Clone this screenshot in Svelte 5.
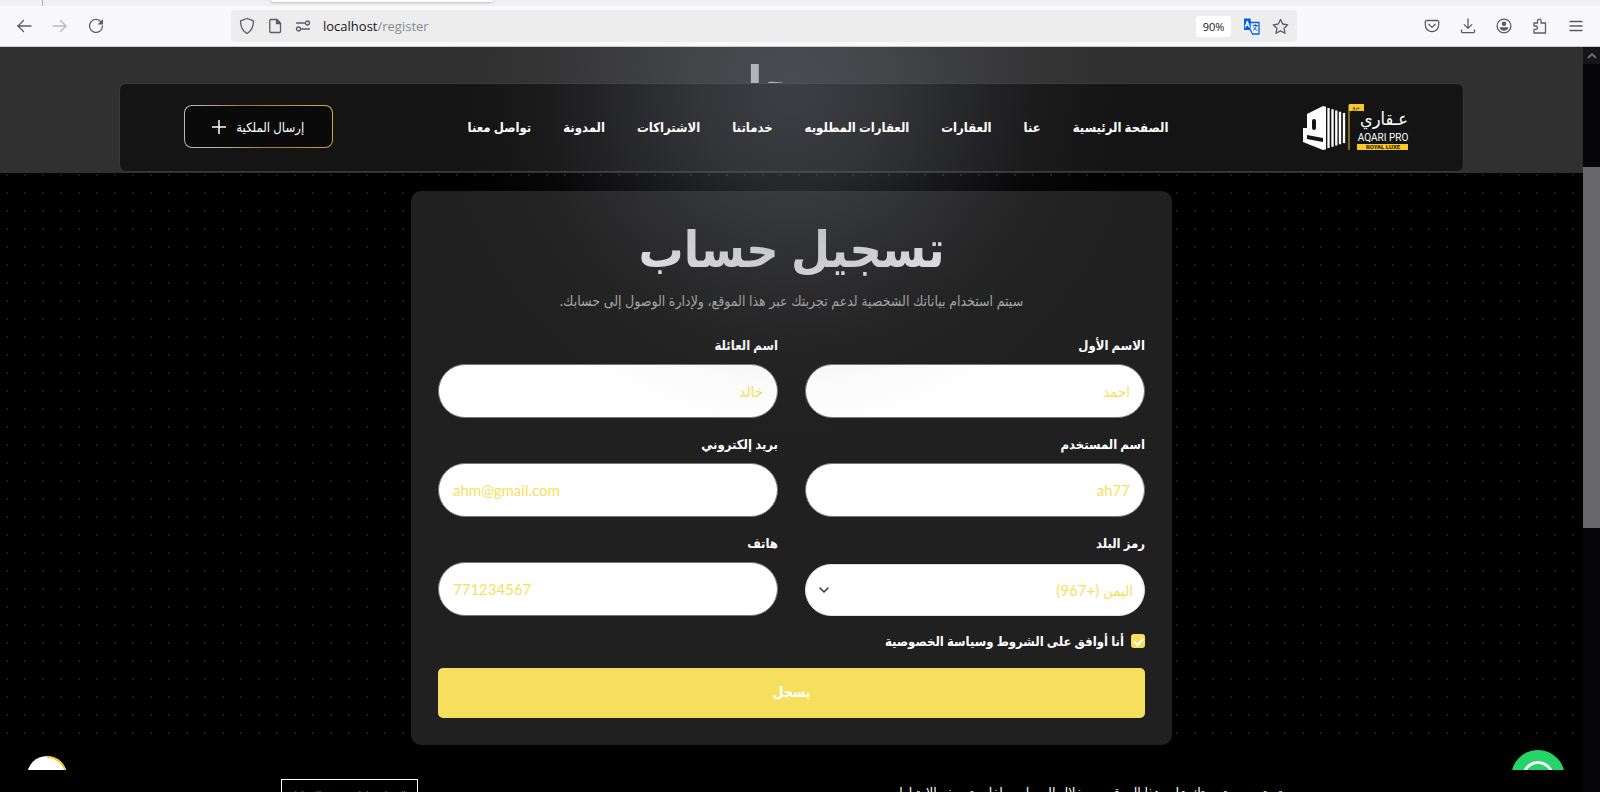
<script>
  const navItems = [
    'الصفحة الرئيسية',
    'عنا',
    'العقارات',
    'العقارات المطلوبه',
    'خدماتنا',
    'الاشتراكات',
    'المدونة',
    'تواصل معنا'
  ];

  const fields = [
    { id: 'first-name', label: 'الاسم الأول', placeholder: 'احمد', type: 'text', dir: 'rtl' },
    { id: 'last-name', label: 'اسم العائلة', placeholder: 'خالد', type: 'text', dir: 'rtl' },
    { id: 'username', label: 'اسم المستخدم', placeholder: 'ah77', type: 'text', dir: 'rtl' },
    { id: 'email', label: 'بريد إلكتروني', placeholder: 'ahm@gmail.com', type: 'email', dir: 'ltr' },
    { id: 'country', label: 'رمز البلد', options: ['اليمن (+967)'] },
    { id: 'phone', label: 'هاتف', placeholder: '771234567', type: 'tel', dir: 'ltr' }
  ];

  let agreed = $state(true);
</script>

<div class="browser">
  <div class="tabs"><span class="tab-line"></span><span class="tab"></span></div>
  <div class="toolbar">
    <div class="tools nav-tools">
      <button aria-label="Back"><svg width="16" height="16" viewBox="0 0 16 16"><path d="M15 8H1.600M7.500 2.500 2 8l5.500 5.500" /></svg></button>
      <button aria-label="Forward" class="off"><svg width="16" height="16" viewBox="0 0 16 16"><path d="M1 8h13.400M8.500 2.500 14 8l-5.500 5.500" /></svg></button>
      <button aria-label="Reload"><svg width="16" height="16" viewBox="0 0 16 16"><path d="M13.200 4A6.500 6.500 0 1 0 14.500 8" /><path d="M15 1v5.500H9.500z" fill="currentColor" stroke="none" /></svg></button>
    </div>
    <div class="address">
      <svg width="16" height="18" viewBox="0 0 16 18"><path d="M8 1.500 1.500 3.800C1.500 9.500 3.500 14 8 16.500c4.500-2.500 6.500-7 6.500-12.700z" /></svg>
      <svg width="16" height="16" viewBox="0 0 16 16"><path d="M3.800 1.500h6l3.700 3.700v8.300a1 1 0 0 1-1 1H3.800a1 1 0 0 1-1-1v-11a1 1 0 0 1 1-1z" /><path d="M9.500 1.500v4h4z" fill="currentColor" /></svg>
      <svg width="16" height="12" viewBox="0 0 16 12"><circle cx="12.500" cy="3" r="2" /><path d="M1.500 3h8M6.500 9h8" /><circle cx="3.500" cy="9" r="2" /></svg>
      <span class="url" dir="ltr">localhost<span>/register</span></span>
      <span class="zoom">90%</span>
      <svg class="translate" width="17" height="17" viewBox="0 0 17 17"><path d="M1 .5h6.500L9 12H1z" fill="#0060df" stroke="none" /><path d="M8 4.500h8v11.500H9.500L7.500 12" fill="#f0f6ff" stroke="#0060df" /><path d="m2.300 9 2-5.500 2 5.500M3 7.200h2.700" stroke="#fff" /><path d="M10 7.500h4.500M12.200 6.500v1M13.500 7.500c-.5 2.500-2 4-3 4.700M10.800 9.500c.8 1.500 2 2.400 3.200 2.700" stroke="#0060df" stroke-width="1" /></svg>
      <svg width="17" height="17" viewBox="0 0 17 17"><path d="m8.500 1.500 2.200 4.500 5 .8-3.600 3.500.9 5-4.500-2.400L4 15.300l.9-5L1.300 6.800l5-.8z" /></svg>
    </div>
    <div class="tools side-tools">
      <button aria-label="Pocket"><svg width="16" height="16" viewBox="0 0 16 16"><path d="M2.500 2.500h11a1.200 1.200 0 0 1 1.200 1.200V7a6.700 6.700 0 0 1-13.400 0V3.700a1.200 1.200 0 0 1 1.200-1.200zM4.700 6.300 8 9.400l3.300-3.100" /></svg></button>
      <button aria-label="Downloads"><svg width="16" height="16" viewBox="0 0 16 16"><path d="M8 .8v9.400M4.200 6.600 8 10.400l3.800-3.800M1.500 12v1.400a1.200 1.200 0 0 0 1.200 1.200h10.600a1.200 1.200 0 0 0 1.200-1.200V12" /></svg></button>
      <button aria-label="Account"><svg width="16" height="16" viewBox="0 0 16 16"><circle cx="8" cy="8" r="6.900" /><circle cx="8" cy="5.800" r="2.300" fill="currentColor" stroke="none" /><path d="M3.800 9.200h8.400c0 2-2 3.600-4.200 3.600S3.800 11.200 3.800 9.200z" fill="currentColor" stroke="none" /></svg></button>
      <button aria-label="Extensions"><svg width="16" height="16" viewBox="0 0 16 16"><path d="M2 5h3.500V3a1.800 1.800 0 0 1 3.600 0v2h4.400v10H2v-3.700h1.800a1.600 1.600 0 0 0 0-3.300H2z" /></svg></button>
      <button aria-label="Menu"><svg width="16" height="16" viewBox="0 0 16 16"><path d="M2 3.500h12M2 8h12M2 12.500h12" /></svg></button>
    </div>
  </div>

  <div class="viewport">
    <div class="page" dir="rtl">
      <section class="band">
        <h1>يسجل</h1>
        <header>
          <a class="logo" href="/" aria-label="Aqari Pro">
            <svg width="106" height="48" viewBox="0 0 106 48">
              <path d="M4 10 20 2v44L0 38V24h4z" fill="#fff" />
              <rect x="9" y="15" width="4" height="11" rx="2" fill="#141414" />
              <path d="M4 31l16 3v4L4 35z" fill="#141414" />
              <path d="M20 2l3 .8v42.400l-3 .8z" fill="#fff" />
              <path d="M25.500 4v40M29.500 5.300v37.400M33.300 6.500v35M37 7.800v32.400M41 9v30" stroke="#fff" stroke-width="2.300" fill="none" />
              <path d="M46 1v45" stroke="#a8851d" stroke-width="1.500" />
              <rect x="46" y="0" width="15" height="7" fill="#fbc927" />
              <text class="flag" x="53" y="5">برو</text>
              <text class="arabic" x="81" y="21">عـقاري</text>
              <text class="latin" x="80" y="37">AQARI PRO</text>
              <rect x="54" y="40" width="51" height="6" fill="#fbc927" />
              <text class="strip" x="80" y="45">ROYAL LUXE</text>
            </svg>
          </a>
          <nav>
            {#each navItems as item}
              <a href="/">{item}</a>
            {/each}
          </nav>
          <a class="submit-property" href="/">
            إرسال الملكية
            <svg width="14" height="14" viewBox="0 0 14 14"><path d="M7 0v14M0 7h14" stroke="#fff" stroke-width="1.500" /></svg>
          </a>
        </header>
      </section>

      <main>
        <form onsubmit={(e) => e.preventDefault()}>
          <h2>تسجيل حساب</h2>
          <p>سيتم استخدام بياناتك الشخصية لدعم تجربتك عبر هذا الموقع، ولإدارة الوصول إلى حسابك.</p>
          <div class="grid">
            {#each fields as f}
              <div class="field">
                <label for={f.id}>{f.label}</label>
                {#if f.options}
                  <div class="select">
                    <select id={f.id}>
                      {#each f.options as o}<option>{o}</option>{/each}
                    </select>
                    <svg width="12" height="8" viewBox="0 0 12 8"><path d="m2 2 4 4 4-4" /></svg>
                  </div>
                {:else}
                  <input id={f.id} type={f.type} dir={f.dir} placeholder={f.placeholder} />
                {/if}
              </div>
            {/each}
          </div>
          <label class="agree">
            <input type="checkbox" bind:checked={agreed} />
            <span>أنا أوافق على الشروط وسياسة الخصوصية</span>
          </label>
          <button class="register">يسجل</button>
        </form>
      </main>

      <div class="glow"></div>

      <button class="float top" aria-label="Back to top">
        <svg width="40" height="40" viewBox="0 0 40 40"><circle cx="20" cy="20" r="20" fill="#fff" /><path d="M20 1a19 19 0 0 1 19 19" fill="none" stroke="#fbc52c" stroke-width="2" /></svg>
      </button>
      <a class="float chat" href="/" aria-label="WhatsApp">
        <svg width="54" height="54" viewBox="0 0 54 54"><circle cx="27" cy="27" r="27" fill="#25d366" /><circle cx="27" cy="27" r="14.500" fill="none" stroke="#fff" stroke-width="3" /><path d="M21 20c2-1 3 3 2 5 1 3 3 5 6 6 2-2 6 0 4 3-6 4-16-6-12-14z" fill="#fff" /></svg>
      </a>

      <div class="cookies">
        <div>
          <span>سيتم تحسين تجربتك على هذا الموقع من خلال السماح بملفات تعريف الارتباط</span>
          <button>السماح بملفات تعريف الارتباط</button>
        </div>
      </div>
    </div>
    <div class="scrollbar">
      <span class="arrow"><svg width="10" height="6" viewBox="0 0 10 6"><path d="m1 5 4-4 4 4" /></svg></span>
      <span class="thumb"></span>
    </div>
  </div>
</div>

<style>
  :global(body) {
    background: #000;
  }
  .browser,
  .browser :global(*) {
    box-sizing: border-box;
  }
  .browser {
    display: flex;
    flex-direction: column;
    height: 100vh;
    overflow: hidden;
    font-family: Lato, 'DejaVu Sans Condensed', 'DejaVu Sans', sans-serif;
  }
  button,
  input,
  select {
    font-family: inherit;
  }
  a {
    color: inherit;
    text-decoration: none;
  }

  /* browser chrome */
  .tabs {
    flex: none;
    display: flex;
    height: 6px;
    background: #f0f0f4;
  }
  .tab-line {
    width: 43px;
    border-right: 1px solid #aeaeb6;
  }
  .tab {
    width: 222px;
    height: 2px;
    margin-left: 228px;
    background: #fff;
    border-radius: 0 0 4px 4px;
    box-shadow: 0 0 3px #80808e;
  }
  .toolbar {
    flex: none;
    display: flex;
    align-items: center;
    height: 41px;
    color: #5b5b66;
    background: #f9f9fb;
    border-bottom: 1px solid #ccc;
  }
  .toolbar svg {
    flex: none;
    fill: none;
    stroke: currentColor;
    stroke-width: 1.3;
    stroke-linecap: round;
    stroke-linejoin: round;
  }
  .tools {
    display: flex;
    gap: 20px;
  }
  .tools button {
    display: flex;
    padding: 0;
    color: inherit;
    background: none;
    border: 0;
  }
  .nav-tools {
    width: 231px;
    padding-left: 16px;
  }
  .off {
    opacity: 0.4;
  }
  .side-tools {
    width: 303px;
    justify-content: flex-end;
    padding-right: 16px;
  }
  .address {
    flex: 1;
    display: flex;
    align-items: center;
    gap: 12px;
    height: 32px;
    padding: 0 8px;
    background: #ededee;
    border-radius: 4px;
  }
  .url {
    flex: 1;
    font: 13px 'Open Sans', sans-serif;
    color: #15141a;
  }
  .url span {
    color: #8a8a90;
  }
  .zoom {
    width: 35px;
    font: 11px/21px 'Open Sans', sans-serif;
    text-align: center;
    color: #15141a;
    background: #fff;
    border-radius: 3px;
  }

  /* page */
  .viewport {
    flex: 1;
    display: flex;
    min-height: 0;
  }
  .page {
    position: relative;
    flex: 1;
    overflow: hidden;
    color: #fff;
    background: #000;
  }
  .band {
    position: relative;
    height: 126px;
    background: #303030;
    overflow: hidden;
  }
  .band h1 {
    margin: 0;
    font-size: 50px;
    line-height: 72px;
    text-align: center;
  }
  header {
    position: absolute;
    top: 36px;
    left: 0;
    right: 0;
    display: flex;
    align-items: center;
    justify-content: space-between;
    width: 85%;
    height: 89px;
    margin: 0 auto;
    padding: 0 54px 2px 64px;
    background: #141414;
    border: 1px solid #383838;
    border-radius: 7px;
  }
  .logo {
    display: flex;
    padding-top: 2px;
  }
  .logo text {
    text-anchor: middle;
    fill: #fff;
  }
  .logo .flag {
    font-size: 6px;
    fill: #141414;
  }
  .logo .arabic {
    font-size: 18px;
  }
  .logo .latin {
    font: 10px Roboto, sans-serif;
  }
  .logo .strip {
    font: bold 6px Roboto, sans-serif;
    fill: #141414;
  }
  nav {
    position: relative;
    z-index: 1;
    display: flex;
    gap: 32px;
    font-size: 13px;
    font-weight: 700;
    white-space: nowrap;
  }
  .submit-property {
    display: flex;
    align-items: center;
    justify-content: center;
    gap: 10px;
    width: 149px;
    height: 43px;
    font-size: 13px;
    border: 1px solid transparent;
    border-radius: 8px;
    background:
      linear-gradient(#0a0a0a, #0a0a0a) padding-box,
      linear-gradient(60deg, #b5b5bd 20%, #a07a2a 50%, #d9ae45) border-box;
  }
  main {
    padding-top: 18px;
    background: #000 radial-gradient(circle at 14px 2px, #1c1c1c 1px, transparent 1px) 11px 0 / 18px 18px;
  }
  form {
    max-width: 761px;
    margin: 0 auto;
    padding: 29px 27px 27px;
    background: #202020;
    border-radius: 10px;
  }
  h2 {
    margin: 0;
    font-size: 50px;
    line-height: 56px;
    text-align: center;
    color: #ececec;
  }
  form p {
    margin: 15px 0 24px;
    font-size: 14px;
    line-height: 20px;
    text-align: center;
    color: #aaa;
  }
  .grid {
    display: grid;
    grid-template-columns: 1fr 1fr;
    column-gap: 27px;
    row-gap: 16px;
  }
  .field {
    display: flex;
    flex-direction: column;
    justify-content: space-between;
    height: 83px;
  }
  label {
    font-size: 13px;
    line-height: 20px;
    font-weight: 700;
  }
  .field input,
  select {
    width: 100%;
    height: 54px;
    padding: 0 14px;
    font-size: 15px;
    color: #f7df5e;
    background: #fff;
    border: 1px solid #777;
    border-radius: 27px;
    outline: 0;
  }
  .field input::placeholder {
    color: #f7df5e;
    opacity: 1;
  }
  .select {
    position: relative;
  }
  select {
    display: block;
    height: 52px;
    padding: 0 11px;
    border-color: #dee2e6;
    appearance: none;
  }
  .select svg {
    position: absolute;
    left: 13px;
    top: 22px;
    fill: none;
    stroke: #343a40;
    stroke-width: 1.6;
    stroke-linecap: round;
    stroke-linejoin: round;
  }
  .agree {
    display: flex;
    align-items: center;
    gap: 7px;
    margin: 15px 0 17px;
  }
  .agree input {
    width: 14px;
    height: 14px;
    margin: 0;
    appearance: none;
    border-radius: 3px;
    background: #f7df5e;
    display: grid;
    place-items: center;
  }
  .agree input:checked::before {
    content: '';
    width: 7px;
    height: 4px;
    border: solid #fff;
    border-width: 0 0 2px 2px;
    transform: rotate(-45deg);
  }
  .register {
    display: block;
    width: 100%;
    height: 50px;
    padding: 0 0 4px;
    font-size: 14px;
    font-weight: 700;
    color: #fff;
    background: #f7df5e;
    border: 0;
    border-radius: 5px;
  }
  .glow {
    position: absolute;
    inset: 0;
    pointer-events: none;
    background: radial-gradient(
      circle 350px at 50% 38px,
      rgba(98, 100, 110, 0.54),
      rgba(98, 100, 110, 0.4) 28%,
      rgba(98, 100, 110, 0.25) 48%,
      rgba(98, 100, 110, 0.08) 72%,
      rgba(98, 100, 110, 0.03) 86%,
      transparent
    );
  }
  .float {
    position: absolute;
    padding: 0;
    background: none;
    border: 0;
  }
  .float svg {
    display: block;
  }
  .top {
    left: 27px;
    bottom: -4px;
  }
  .chat {
    right: 18px;
    bottom: -12px;
  }
  .cookies {
    position: absolute;
    left: 0;
    right: 0;
    bottom: 0;
    height: 22px;
    padding: 9px 5px 0 0;
    background: #000;
    overflow: hidden;
  }
  .cookies div {
    display: flex;
    justify-content: space-between;
    max-width: 1016px;
    margin: 0 auto;
  }
  .cookies span {
    font-size: 14px;
    line-height: 28px;
  }
  .cookies button {
    width: 137px;
    height: 36px;
    padding: 0 0 4px;
    font-size: 10px;
    color: #888;
    background: #000;
    border: 1px solid #fff;
    white-space: nowrap;
  }
  .scrollbar {
    flex: none;
    width: 17px;
    background: #060608;
  }
  .arrow {
    display: flex;
    align-items: center;
    justify-content: center;
    height: 17px;
    background: #151517;
  }
  .arrow path {
    fill: none;
    stroke: #68686a;
    stroke-width: 2;
  }
  .thumb {
    display: block;
    height: 361px;
    margin-top: 103px;
    background: #68686a;
  }
</style>
